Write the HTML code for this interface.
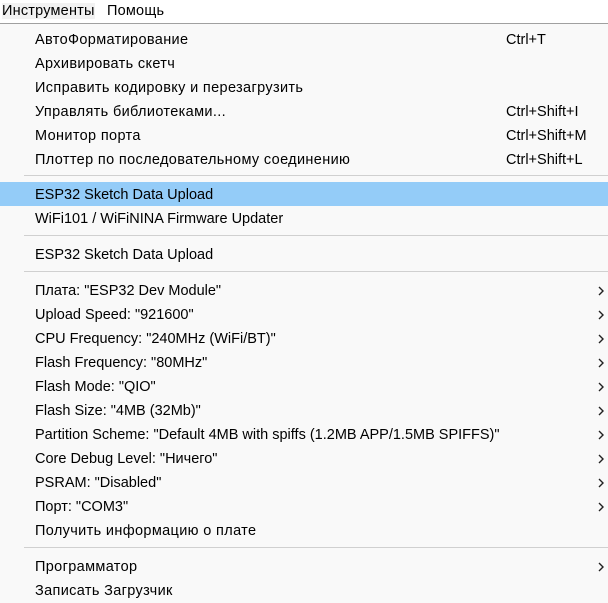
<!DOCTYPE html>
<html><head><meta charset="utf-8"><style>
body{margin:0;width:608px;height:602px;overflow:hidden;background:#f9f9f9;font-family:"Liberation Sans",sans-serif;font-size:14.5px;color:#000;position:relative}
.bar{position:absolute;left:0;top:0;width:608px;height:23px;background:#fff;border-bottom:1px solid #a0a0a0}
.bar span{position:absolute;top:3px;font-size:14.5px;letter-spacing:0.2px}
.it{position:absolute;left:0;width:608px;height:24px;line-height:24px}
.it .t{position:absolute;left:35px;top:1px}
.c{letter-spacing:0.35px}
.it .s{position:absolute;left:506px;top:1px}
.it svg{position:absolute;left:598px;top:8px}
.hl{background:#94ccf8}
.sep{position:absolute;left:24px;width:584px;height:1px;background:#d0d0d0}
</style></head><body>
<div class="bar"><span style="left:2px;background:#f2f2f2">Инструменты</span><span style="left:107px">Помощь</span></div>
<div class="it" style="top:27px"><span class="t c">АвтоФорматирование</span><span class="s">Ctrl+T</span></div>
<div class="it" style="top:51px"><span class="t c">Архивировать скетч</span></div>
<div class="it" style="top:75px"><span class="t c">Исправить кодировку и перезагрузить</span></div>
<div class="it" style="top:99px"><span class="t c">Управлять библиотеками...</span><span class="s">Ctrl+Shift+I</span></div>
<div class="it" style="top:123px"><span class="t c">Монитор порта</span><span class="s">Ctrl+Shift+M</span></div>
<div class="it" style="top:147px"><span class="t c">Плоттер по последовательному соединению</span><span class="s">Ctrl+Shift+L</span></div>
<div class="sep" style="top:175px"></div>
<div class="it hl" style="top:182px"><span class="t">ESP32 Sketch Data Upload</span></div>
<div class="it" style="top:206px"><span class="t">WiFi101 / WiFiNINA Firmware Updater</span></div>
<div class="sep" style="top:235px"></div>
<div class="it" style="top:242px"><span class="t">ESP32 Sketch Data Upload</span></div>
<div class="sep" style="top:271px"></div>
<div class="it" style="top:278px"><span class="t">Плата: "ESP32 Dev Module"</span><svg width="6" height="10"><path d="M1 1l4 4-4 4" fill="none" stroke="#222" stroke-width="1.4"/></svg></div>
<div class="it" style="top:302px"><span class="t">Upload Speed: "921600"</span><svg width="6" height="10"><path d="M1 1l4 4-4 4" fill="none" stroke="#222" stroke-width="1.4"/></svg></div>
<div class="it" style="top:326px"><span class="t">CPU Frequency: "240MHz (WiFi/BT)"</span><svg width="6" height="10"><path d="M1 1l4 4-4 4" fill="none" stroke="#222" stroke-width="1.4"/></svg></div>
<div class="it" style="top:350px"><span class="t">Flash Frequency: "80MHz"</span><svg width="6" height="10"><path d="M1 1l4 4-4 4" fill="none" stroke="#222" stroke-width="1.4"/></svg></div>
<div class="it" style="top:374px"><span class="t">Flash Mode: "QIO"</span><svg width="6" height="10"><path d="M1 1l4 4-4 4" fill="none" stroke="#222" stroke-width="1.4"/></svg></div>
<div class="it" style="top:398px"><span class="t">Flash Size: "4MB (32Mb)"</span><svg width="6" height="10"><path d="M1 1l4 4-4 4" fill="none" stroke="#222" stroke-width="1.4"/></svg></div>
<div class="it" style="top:422px"><span class="t">Partition Scheme: "Default 4MB with spiffs (1.2MB APP/1.5MB SPIFFS)"</span><svg width="6" height="10"><path d="M1 1l4 4-4 4" fill="none" stroke="#222" stroke-width="1.4"/></svg></div>
<div class="it" style="top:446px"><span class="t">Core Debug Level: "Ничего"</span><svg width="6" height="10"><path d="M1 1l4 4-4 4" fill="none" stroke="#222" stroke-width="1.4"/></svg></div>
<div class="it" style="top:470px"><span class="t">PSRAM: "Disabled"</span><svg width="6" height="10"><path d="M1 1l4 4-4 4" fill="none" stroke="#222" stroke-width="1.4"/></svg></div>
<div class="it" style="top:494px"><span class="t">Порт: "COM3"</span><svg width="6" height="10"><path d="M1 1l4 4-4 4" fill="none" stroke="#222" stroke-width="1.4"/></svg></div>
<div class="it" style="top:518px"><span class="t c">Получить информацию о плате</span></div>
<div class="sep" style="top:547px"></div>
<div class="it" style="top:554px"><span class="t c">Программатор</span><svg width="6" height="10"><path d="M1 1l4 4-4 4" fill="none" stroke="#222" stroke-width="1.4"/></svg></div>
<div class="it" style="top:578px"><span class="t c">Записать Загрузчик</span></div>
</body></html>
